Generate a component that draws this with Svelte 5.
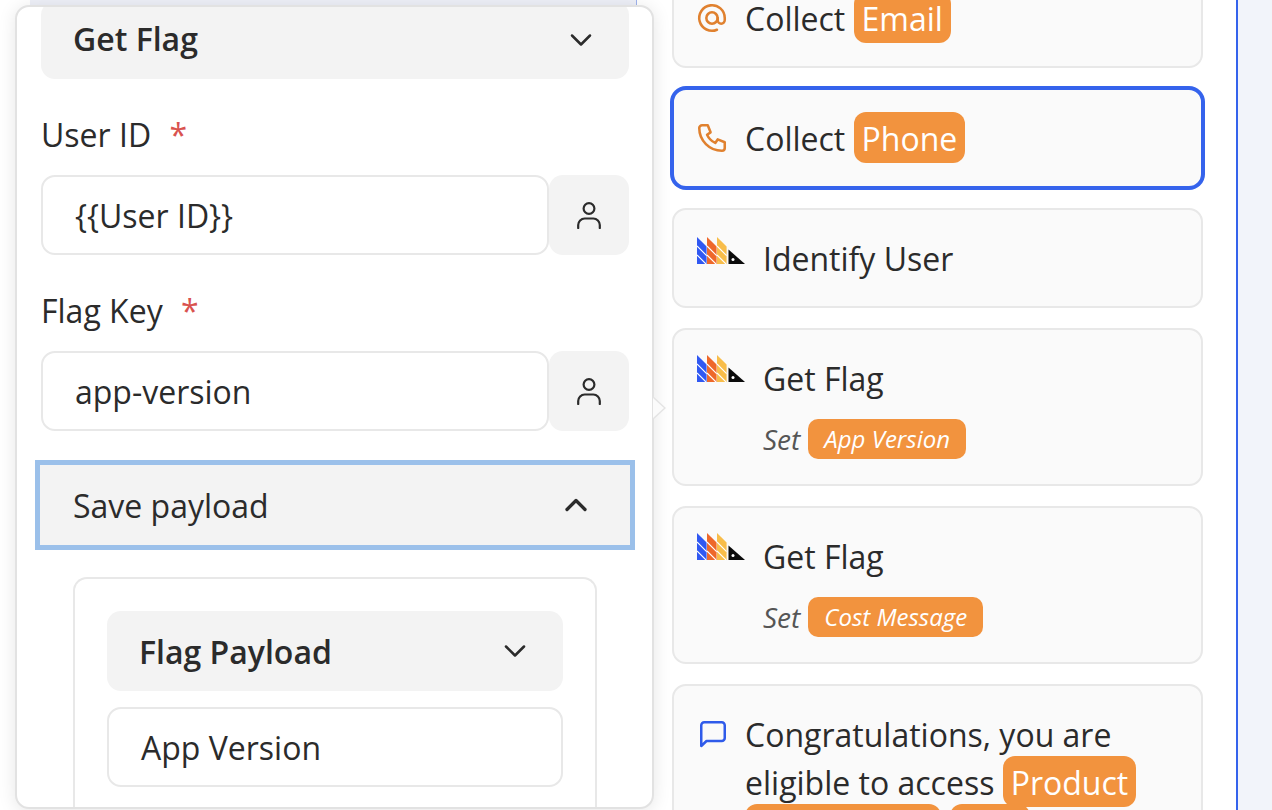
{#snippet logo()}
  <svg class="logo" viewBox="0 0 48 27" width="48" height="27">
    <path d="M0 0l9.600 9.600V27H0z" fill="#3058f2"/>
    <path d="M10 0l9.600 9.600V27H10z" fill="#ee682a"/>
    <path d="M20 0l9.600 9.600V27H20z" fill="#f8bd4a"/>
    <g stroke="#fff" stroke-width="1.100" fill="none">
      <path d="M0 9L9.600 18.600M0 18L9 27M10 9L19.600 18.600M10 18L19 27M20 9L29.600 18.600M20 18L29 27"/>
    </g>
    <path d="M31.500 12.500L48 27H31.500z" fill="#0b0b0b"/>
    <circle cx="36" cy="22.500" r="1.500" fill="#fff"/>
  </svg>
{/snippet}

{#snippet person()}
  <svg viewBox="0 0 24 27" width="24" height="27" fill="none" stroke="#2b2b2b" stroke-width="2.200" stroke-linecap="round" stroke-linejoin="round">
    <circle cx="12" cy="6.500" r="5.400"/>
    <path d="M1.200 26v-3a6.500 6.500 0 0 1 6.500-6.500h8.600a6.500 6.500 0 0 1 6.500 6.500v3"/>
  </svg>
{/snippet}

{#snippet chevron(up)}
  <svg viewBox="0 0 24 24" width="36" height="36" fill="none" stroke="#2b2b2b" stroke-width={up ? 2.2 : 1.700} stroke-linecap="round" stroke-linejoin="round">
    {#if up}<path d="M6 15l6-6 6 6"/>{:else}<path d="M6 9l6 6 6-6"/>{/if}
  </svg>
{/snippet}

<div class="page">
  <div class="topbar"></div>

  <div class="canvas">
    <div class="card row">
      <svg class="ic" viewBox="0 0 24 24" width="34" height="34" fill="none" stroke="#e0812f" stroke-width="1.800" stroke-linecap="round" stroke-linejoin="round">
        <circle cx="12" cy="12" r="4"/>
        <path d="M16 12v1.500a2.500 2.500 0 0 0 5 0V12a9 9 0 1 0-5.500 8.300"/>
      </svg>
      <span class="txt">Collect <span class="tag">Email</span></span>
    </div>

    <div class="card row active">
      <svg class="ic" viewBox="0 0 24 24" width="34" height="34" fill="none" stroke="#e0812f" stroke-width="1.800" stroke-linecap="round" stroke-linejoin="round">
        <path d="M5 3h4l2 5-2.500 1.700a12 12 0 0 0 5.800 5.800L16 13l5 2v4a2 2 0 0 1-2 2A16 16 0 0 1 3 5a2 2 0 0 1 2-2"/>
      </svg>
      <span class="txt">Collect <span class="tag">Phone</span></span>
    </div>

    <div class="card row ph">
      {@render logo()}
      <span class="txt">Identify User</span>
    </div>

    <div class="card ph tall">
      <div class="row">
        {@render logo()}
        <span class="txt">Get Flag</span>
      </div>
      <div class="set"><em>Set</em> <span class="stag">App Version</span></div>
    </div>

    <div class="card ph tall">
      <div class="row">
        {@render logo()}
        <span class="txt">Get Flag</span>
      </div>
      <div class="set"><em>Set</em> <span class="stag">Cost Message</span></div>
    </div>

    <div class="card row msg">
      <svg class="ic" viewBox="0 0 34 34" width="34" height="34" fill="none" stroke="#2f5bea" stroke-width="2.500" stroke-linecap="round" stroke-linejoin="round">
        <path d="M7.250 27V6.250a3 3 0 0 1 3-3h17.500a3 3 0 0 1 3 3V19a3 3 0 0 1-3 3H12.500z"/>
      </svg>
      <span class="txt lines">Congratulations, you are eligible to access <span class="tag">Product</span> <span class="tag sub">Subscription</span> <span class="tag">Plan</span></span>
    </div>
  </div>

  <div class="rail"></div>

  <aside class="pop">
    <svg class="tip" viewBox="0 0 13 24" width="13" height="24">
      <path d="M0 1l12 11L0 23" fill="#fbfbfb" stroke="#e4e4e4" stroke-width="1.500"/>
    </svg>
    <div class="inside">
      <div class="sel head"><b>Get Flag</b>{@render chevron(false)}</div>

      <div class="label">User ID <span class="req">*</span></div>
      <div class="field">
        <div class="input">{'{{User ID}}'}</div>
        <div class="vbtn">{@render person()}</div>
      </div>

      <div class="label">Flag Key <span class="req">*</span></div>
      <div class="field">
        <div class="input">app-version</div>
        <div class="vbtn">{@render person()}</div>
      </div>

      <div class="sel focus"><span>Save payload</span>{@render chevron(true)}</div>

      <div class="payload">
        <div class="sel inner"><b>Flag Payload</b>{@render chevron(false)}</div>
        <div class="input single">App Version</div>
      </div>
    </div>
  </aside>
</div>

<style>
  :global(body) {
    margin: 0;
    background: #fff;
  }
  .page {
    position: relative;
    width: 1272px;
    height: 810px;
    overflow: hidden;
    font-family: "Open Sans", sans-serif;
    color: #2b2b2b;
    font-size: 32px;
    display: flex;
    background: #fff;
  }
  .topbar {
    position: absolute;
    left: 30px;
    top: 0;
    width: 607px;
    height: 5px;
    background: #eef0f8;
    border-right: 1px solid #9fb3ee;
    box-sizing: border-box;
  }
  .canvas {
    margin-left: 672px;
    margin-top: -32px;
    width: 531px;
    flex: none;
    display: flex;
    flex-direction: column;
    gap: 20px;
  }
  .card {
    box-sizing: border-box;
    flex: none;
    border: 2px solid #e8e8e8;
    border-radius: 14px;
    background: #fafafa;
    padding: 0 30px 0 22px;
  }
  .row {
    display: flex;
    align-items: center;
  }
  .card.row {
    height: 100px;
  }
  .card.row > .txt {
    padding-top: 2px;
  }
  .card.msg > .txt {
    padding-top: 1px;
  }
  .active {
    border-color: #3563ec;
    box-shadow: 0 0 0 2px #3563ec;
  }
  .ic {
    flex: none;
    margin-right: 16px;
    margin-left: -1px;
  }
  .txt {
    line-height: 48px;
    white-space: nowrap;
  }
  .tag {
    background: #f2933e;
    color: #fff;
    border-radius: 12px;
    padding: 5px 8px 3px;
    -webkit-box-decoration-break: clone;
    box-decoration-break: clone;
  }
  .tag.sub {
    padding-left: 5px;
    padding-right: 5px;
  }
  .ph {
    padding-left: 23px;
  }
  .logo {
    flex: none;
    margin-right: 18px;
    margin-top: -16px;
  }
  .tall {
    height: 158px;
    padding-top: 25px;
  }
  .tall .logo {
    margin-top: -22px;
  }
  .set {
    margin-top: 16px;
    margin-left: 66px;
    font-size: 28px;
    line-height: 40px;
    display: flex;
    gap: 8px;
    color: #555;
  }
  .set em {
    font-style: italic;
  }
  .stag {
    background: #f2933e;
    color: #fff;
    font-style: italic;
    border-radius: 10px;
    padding: 0 16px;
    font-size: 24px;
  }
  .msg {
    height: 200px !important;
    align-items: flex-start;
    padding-top: 24px;
  }
  .msg .ic {
    margin-top: 9px;
    margin-left: -2px;
    margin-right: 17px;
  }
  .lines {
    white-space: normal;
    width: 440px;
  }
  .rail {
    position: absolute;
    left: 1236px;
    top: 0;
    right: 0;
    bottom: 0;
    background: #f2f4fa;
    border-left: 2px solid #3563ec;
  }
  .pop {
    position: absolute;
    left: 15px;
    top: 5px;
    width: 639px;
    height: 804px;
    box-sizing: border-box;
    background: #fff;
    border: 2px solid #e2e2e2;
    border-radius: 14px;
    box-shadow: 0 2px 18px rgba(0, 0, 0, 0.1);
  }
  .tip {
    position: absolute;
    right: -14px;
    top: 389px;
  }
  .inside {
    height: 100%;
    overflow: hidden;
    box-sizing: border-box;
    padding: 0 23px 0 24px;
    border-radius: 12px;
  }
  .sel {
    display: flex;
    align-items: center;
    justify-content: space-between;
    background: #f3f3f3;
    box-sizing: border-box;
    border-radius: 14px;
    padding: 0 30px 0 32px;
  }
  .sel b {
    font-weight: 600;
  }
  .head {
    height: 78px;
    margin-top: -6px;
  }
  .head b {
    margin-bottom: 4px;
  }
  .label {
    line-height: 40px;
    margin-top: 36px;
    margin-bottom: 20px;
  }
  .req {
    color: #d9534f;
    margin-left: 10px;
  }
  .field {
    display: flex;
  }
  .input {
    box-sizing: border-box;
    flex: 1;
    height: 80px;
    border: 2px solid #e8e8e8;
    border-radius: 14px;
    display: flex;
    align-items: center;
    padding: 0 32px;
    background: #fff;
  }
  .vbtn {
    flex: none;
    width: 80px;
    height: 80px;
    background: #f3f3f3;
    border-radius: 14px;
    display: flex;
    align-items: center;
    justify-content: center;
  }
  .focus {
    height: 90px;
    margin: 29px -6px 0;
    border: 5px solid #9bc0ea;
    border-radius: 0;
    padding: 0 36px 0 33px;
  }
  .payload {
    box-sizing: border-box;
    margin: 27px 0 0 32px;
    border: 2px solid #e8e8e8;
    border-bottom: 0;
    border-radius: 14px 14px 0 0;
    height: 240px;
    padding: 32px;
    width: 524px;
  }
  .inner {
    height: 80px;
  }
  .single {
    margin-top: 16px;
    flex: none;
  }
</style>
